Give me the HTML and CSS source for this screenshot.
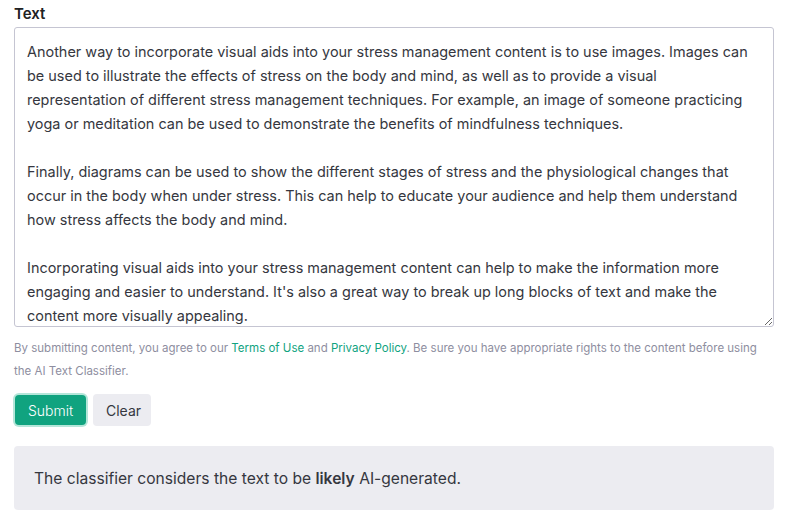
FILE: index.html
```html
<!DOCTYPE html>
<html>
<head>
<meta charset="utf-8">
<link rel="stylesheet" href="styles.css">
</head>
<body>
<div class="page">
  <label class="label" for="t">Text</label>
  <textarea id="t" class="input">Another way to incorporate visual aids into your stress management content is to use images. Images can be used to illustrate the effects of stress on the body and mind, as well as to provide a visual representation of different stress management techniques. For example, an image of someone practicing yoga or meditation can be used to demonstrate the benefits of mindfulness techniques.

Finally, diagrams can be used to show the different stages of stress and the physiological changes that occur in the body when under stress. This can help to educate your audience and help them understand how stress affects the body and mind.

Incorporating visual aids into your stress management content can help to make the information more engaging and easier to understand. It's also a great way to break up long blocks of text and make the content more visually appealing.</textarea>
  <p class="terms">By submitting content, you agree to our <a href="#">Terms of Use</a> and <a href="#">Privacy Policy</a>. Be sure you have appropriate rights to the content before using the AI Text Classifier.</p>
  <div class="actions">
    <button class="btn btn-primary">Submit</button>
    <button class="btn btn-secondary">Clear</button>
  </div>
  <div class="result"><span>The classifier considers the text to be <strong>likely</strong> AI-generated.</span></div>
</div>
</body>
</html>
```
FILE: styles.css
```css
* { box-sizing: border-box; }
html, body { margin: 0; padding: 0; background: #fff; }
body {
  font-family: Inter, "Noto Sans", sans-serif;
  color: #353740;
}
.page {
  padding: 3px 12px 0 14px;
  display: flex;
  flex-direction: column;
}
.label {
  font-size: 15px;
  font-weight: 600;
  line-height: 22px;
  color: #202123;
  margin-bottom: 2px;
}
.input {
  display: block;
  width: 760px;
  height: 300px;
  border: 1px solid #c5c5d2;
  border-radius: 3px;
  padding: 12px 22px 12px 12px;
  font-family: Inter, "Noto Sans", sans-serif;
  font-size: 14.45px;
  line-height: 24px;
  color: #353740;
  resize: vertical;
  overflow: hidden;
  margin: 0;
}
.terms {
  margin: 10px 0 0;
  width: 760px;
  font-size: 11.5px;
  line-height: 23px;
  color: #8e8ea0;
}
.terms a { color: #10a37f; text-decoration: none; }
.actions {
  display: flex;
  gap: 7px;
  margin-top: 11px;
}
.btn {
  font-family: Inter, "Noto Sans", sans-serif;
  font-size: 14px;
  border: none;
  border-radius: 4px;
  height: 32px;
  padding: 0 13px;
  cursor: pointer;
}
.btn-primary {
  background: #10a37f;
  color: #fff;
  font-weight: 300;
  box-shadow: 0 0 0 2px #b4e6d9;
  margin-left: 1px;
  height: 30px;
  margin-top: 1px;
  width: 71px;
}
.btn-secondary {
  background: #ececf1;
  color: #353740;
  width: 58px;
}
.result {
  margin-top: 20px;
  background: #ececf1;
  border-radius: 4px;
  width: 760px;
  height: 64px;
  padding: 0 20px;
  display: flex;
  align-items: center;
  font-size: 15.6px;
  color: #353740;
}
.result strong { font-weight: 600; }
```
